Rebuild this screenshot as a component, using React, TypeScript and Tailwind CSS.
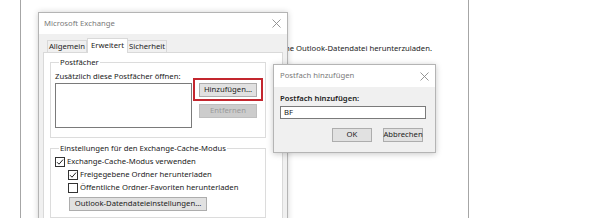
import React from 'react';

const font = { fontFamily: '"Noto Sans", "Open Sans", sans-serif' };

const Check = ({ checked }: { checked: boolean }) => (
  <span className="w-[10px] h-[10px] border border-[#333] bg-white flex items-center justify-center shrink-0">
    {checked && (
      <svg width="8" height="8" viewBox="0 0 8 8" fill="none">
        <path d="M1 4.2 L3 6.2 L7 1.6" stroke="#222" strokeWidth="1" />
      </svg>
    )}
  </span>
);

const CloseX = () => (
  <svg width="9" height="9" viewBox="0 0 9 9" fill="none">
    <path d="M0.5 0.5 L8.5 8.5 M8.5 0.5 L0.5 8.5" stroke="#8a8a8a" strokeWidth="0.9" />
  </svg>
);

const Group = ({ title, className, children }: { title: string; className?: string; children: React.ReactNode }) => (
  <fieldset className={`border border-[#dcdcdc] ${className ?? ''}`}>
    <legend className="ml-[4px] px-[1px] h-[14px] leading-[14px] text-[#222]">{title}</legend>
    {children}
  </fieldset>
);

const Button = ({ label, className, disabled }: { label: string; className: string; disabled?: boolean }) => (
  <div
    className={`${className} border flex items-center justify-center whitespace-nowrap ${
      disabled ? 'bg-[#cccccc] border-[#bfbfbf] text-[#9a9a9a]' : 'bg-[#e1e1e1] border-[#adadad] text-[#222]'
    }`}
  >
    {label}
  </div>
);

const App = () => {
  return (
    <div className="relative w-[605px] h-[218px] bg-white overflow-hidden text-[7.7px] text-[#222]" style={font}>
      {/* background window */}
      <div className="absolute left-[20px] top-0 w-[449px] h-[218px] border-x border-[#a6a6a6] bg-white">
        <div className="pl-[264px] pt-[42px] leading-[12px] whitespace-nowrap">ne Outlook-Datendatei herunterzuladen.</div>
      </div>

      {/* Microsoft Exchange */}
      <div className="absolute left-[38px] top-[12px] w-[250px] h-[230px] bg-[#f0f0f0] border border-[#b4b4b4] shadow-[0_0_6px_rgba(0,0,0,0.18)] flex flex-col">
        <div className="h-[21px] bg-white flex items-center justify-between pl-[5px] pr-[6px] shrink-0">
          <span className="text-[#7a7a7a]">Microsoft Exchange</span>
          <CloseX />
        </div>
        <div className="flex flex-col px-[4px] pt-[4px] flex-1">
          <div className="flex items-end pl-[4px] h-[14px]">
            <div className="w-[40px] h-[12px] flex items-center justify-center border border-[#d9d9d9] border-b-0 bg-[#f0f0f0]">Allgemein</div>
            <div className="w-[41px] h-[15px] flex items-start justify-center pt-[1px] border border-[#d9d9d9] border-b-0 bg-white -mb-px relative z-10">Erweitert</div>
            <div className="w-[39px] h-[12px] flex items-center justify-center border border-[#d9d9d9] border-b-0 border-l-0 bg-[#f0f0f0]">Sicherheit</div>
          </div>
          <div className="flex-1 bg-white border border-[#d9d9d9] pl-[6px] pr-[16px] pt-[2px] flex flex-col gap-[3px]">
            <Group title="Postfächer" className="pl-[4px] pb-[9px]">
              <div className="leading-[12px] mt-[1px]">Zusätzlich diese Postfächer öffnen:</div>
              <div className="flex gap-[7px] mt-[1px]">
                <div className="w-[137px] h-[45px] border border-[#7a7a7a] bg-white" />
                <div className="flex flex-col gap-[7px]">
                  <div className="relative">
                    <Button label="Hinzufügen..." className="w-[58px] h-[14px]" />
                    <div className="absolute -left-[6px] -right-[6px] -top-[5px] -bottom-[4px] border-2 border-[#c3262e]" />
                  </div>
                  <Button label="Entfernen" className="w-[58px] h-[14px]" disabled />
                </div>
              </div>
            </Group>
            <Group title="Einstellungen für den Exchange-Cache-Modus" className="pl-[4px] pb-[6px]">
              <div className="flex flex-col gap-[3px] mt-[2px]">
                <label className="flex items-center gap-[2px] h-[10px] whitespace-nowrap"><Check checked />Exchange-Cache-Modus verwenden</label>
                <label className="flex items-center gap-[2px] h-[10px] pl-[13px] whitespace-nowrap"><Check checked />Freigegebene Ordner herunterladen</label>
                <label className="flex items-center gap-[2px] h-[10px] pl-[13px] whitespace-nowrap"><Check checked={false} />Öffentliche Ordner-Favoriten herunterladen</label>
              </div>
              <Button label="Outlook-Datendateieinstellungen..." className="ml-[14px] mt-[4px] w-[138px] h-[14px]" />
            </Group>
          </div>
        </div>
      </div>

      {/* Postfach hinzufügen */}
      <div className="absolute left-[273px] top-[64px] w-[163px] h-[89px] bg-[#f0f0f0] border border-[#b4b4b4] shadow-[0_1px_6px_rgba(0,0,0,0.22)] flex flex-col">
        <div className="h-[22px] bg-white flex items-center justify-between pl-[6px] pr-[6px] shrink-0">
          <span className="text-[#7a7a7a]">Postfach hinzufügen</span>
          <CloseX />
        </div>
        <div className="flex flex-col px-[6px] pt-[5px]">
          <div className="font-semibold leading-[12px]">Postfach hinzufügen:</div>
          <div className="mt-[2px] w-[146px] h-[13px] border border-[#7a7a7a] bg-white flex items-center pl-[3px]">BF</div>
          <div className="flex justify-end gap-[11px] mt-[9px] pr-[6px]">
            <Button label="OK" className="w-[40px] h-[14px]" />
            <Button label="Abbrechen" className="w-[40px] h-[14px]" />
          </div>
        </div>
      </div>
    </div>
  );
};

export default App;
